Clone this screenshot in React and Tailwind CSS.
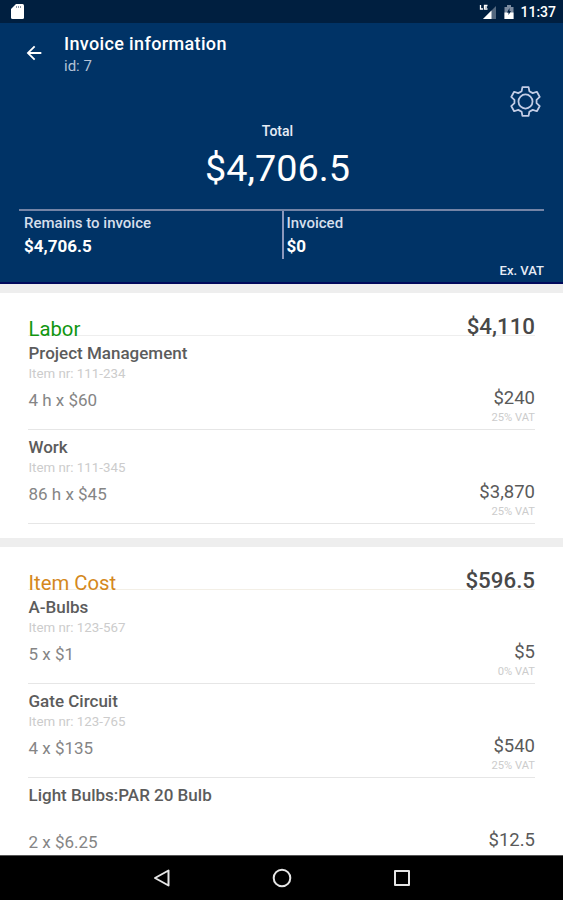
import { MdArrowBack } from "react-icons/md";

const sections = [
  {
    title: "Labor",
    total: "$4,110",
    titleClass: "text-[#119611]",
    lineClass: "border-[#eeeeee]",
    items: [
      { name: "Project Management", nr: "111-234", qty: "4 h x $60", price: "$240", vat: "25% VAT" },
      { name: "Work", nr: "111-345", qty: "86 h x $45", price: "$3,870", vat: "25% VAT" },
    ],
  },
  {
    title: "Item Cost",
    total: "$596.5",
    titleClass: "text-[#d4881c]",
    lineClass: "border-[#f3efe6]",
    items: [
      { name: "A-Bulbs", nr: "123-567", qty: "5 x $1", price: "$5", vat: "0% VAT" },
      { name: "Gate Circuit", nr: "123-765", qty: "4 x $135", price: "$540", vat: "25% VAT" },
      { name: "Light Bulbs:PAR 20 Bulb", nr: "", qty: "2 x $6.25", price: "$12.5", vat: "" },
    ],
  },
];

function GearIcon() {
  return (
    <svg viewBox="0 0 30 30" className="h-[31px] w-[31px]" fill="none" stroke="#c3cde6" strokeWidth="1.7" strokeLinejoin="round">
      <path d="M12 1h6l.7 4 3.3 1.900 4-1.300 2.800 5-3.100 2.800v3.200l3.100 2.800-2.800 5-4-1.300-3.300 1.900L18 29h-6l-.7-4L8 23.100l-4 1.300-2.800-5 3.100-2.800v-3.200l-3.100-2.800 2.800-5 4 1.300L11.300 5z" />
      <circle cx="15" cy="15" r="6.8" />
    </svg>
  );
}

function StatusBar() {
  return (
    <div className="flex h-[23px] shrink-0 items-center justify-between bg-[#001f40] pr-[7px] pl-[11px]">
      <svg viewBox="0 0 13 15" className="h-[15px] w-[13px]">
        <path d="M5 0h6.500Q13 0 13 1.500v12q0 1.500-1.500 1.500h-10Q0 15 0 13.500V5z" fill="#fff" />
        <path d="M5.500 2v2M7.500 2v2M9.500 2v2" stroke="#8a96a6" strokeWidth="1" />
      </svg>
      <div className="flex items-center">
        <svg viewBox="0 0 18 16" className="h-4 w-[18px]">
          <path d="M17 2v13H4z" fill="#54687f" />
          <path d="M12.500 6.500V15H4z" fill="#fff" />
          <path d="M1.500 1v4h2.500M8.500 1.500h-3V5h3M5.500 3.200h2.500" fill="none" stroke="#fff" strokeWidth="1.300" />
        </svg>
        <svg viewBox="0 0 10 14" className="ml-[7px] h-[14px] w-[10px]">
          <path d="M3 0h4v2h2.500v12h-9V2H3z" fill="#7c8ba0" />
          <path d="M.5 7.500h9V14h-9z" fill="#fff" />
          <path d="M5.500 3 3 7.500h1.500v2.500L7 6H5.500z" fill="#001f40" />
        </svg>
        <span className="ml-[6px] mt-px text-[14px] font-medium text-white">11:37</span>
      </div>
    </div>
  );
}

function Header() {
  return (
    <header className="flex h-[261px] shrink-0 flex-col border-b-2 border-[#000a5c] bg-[#003366] text-white">
      <div className="flex pt-[11px] pl-[24px]">
        <MdArrowBack className="mt-[8px] -ml-px h-[22px] w-[22px]" />
        <div className="ml-[19px]">
          <h1 className="text-[18px] leading-5 font-medium tracking-[0.02em]">Invoice information</h1>
          <p className="mt-[2px] text-[15px] leading-5 text-[#b3c2d6]">id: 7</p>
        </div>
      </div>
      <div className="mt-[10px] mr-[22px] flex h-[31px] justify-end">
        <GearIcon />
      </div>
      <div className="mt-[5px] pr-2 text-center">
        <p className="text-[14px] leading-[18px] font-medium text-[#e6ecf5]">Total</p>
        <p className="mt-[6px] text-[37.8px] leading-[44px]">$4,706.5</p>
      </div>
      <div className="mx-[19px] mt-[19px] grid grid-cols-2 border-t-2 border-[#7484a6] text-[15px]">
        <div className="pt-[2px] pl-[5px]">
          <p className="leading-5 font-medium text-[#d5dfec]">Remains to invoice</p>
          <p className="mt-[3px] text-[17px] leading-5 font-bold">$4,706.5</p>
        </div>
        <div className="h-[48px] border-l-2 border-[#8c98bc] pt-[2px] pl-[3px]">
          <p className="leading-5 font-medium text-[#d5dfec]">Invoiced</p>
          <p className="mt-[3px] text-[17px] leading-5 font-bold">$0</p>
        </div>
      </div>
      <p className="mt-[4px] mr-[19px] text-right text-[13px] leading-4 font-medium text-[#e6ecf5]">Ex. VAT</p>
    </header>
  );
}

function ItemRow({ item }) {
  return (
    <li className="flex h-[94px] justify-between border-b border-[#e6e6e6]">
      <div className="pt-[7px] pl-[0.5px]">
        <p className="text-[17px] leading-5 font-medium text-[#5c5c5c]">{item.name}</p>
        <p className="mt-[2px] h-[18px] text-[13.3px] leading-[18px] text-[#ccc]">{item.nr && `Item nr: ${item.nr}`}</p>
        <p className="mt-[7px] text-[17px] leading-5 text-[#858585]">{item.qty}</p>
      </div>
      <div className="pt-[50px] text-right">
        <p className="text-[18.5px] leading-6 text-[#5a5a5a]">{item.price}</p>
        <p className="text-[11.2px] leading-4 text-[#ccc]">{item.vat}</p>
      </div>
    </li>
  );
}

function Section({ section }) {
  return (
    <section className="mb-[9px] bg-white px-[28px] pb-[14px]">
      <div className={`flex h-[43px] items-end justify-between border-b ${section.lineClass}`}>
        <h2 className={`-mb-[6px] pl-[0.5px] text-[20.3px] leading-6 ${section.titleClass}`}>{section.title}</h2>
        <span className="-mb-[5px] text-[22.3px] leading-7 font-medium text-[#484848]">{section.total}</span>
      </div>
      <ul>
        {section.items.map((item) => (
          <ItemRow key={item.name} item={item} />
        ))}
      </ul>
    </section>
  );
}

function NavBar() {
  return (
    <nav className="flex h-[45px] shrink-0 items-center justify-center gap-[100px] border-t border-[#555] bg-black">
      <svg viewBox="0 0 20 20" className="h-5 w-5" fill="none" stroke="#e6e6e6" strokeWidth="2" strokeLinejoin="round">
        <path d="M16.500 2.500v15L3 10z" />
      </svg>
      <svg viewBox="0 0 20 20" className="h-5 w-5" fill="none" stroke="#e6e6e6" strokeWidth="2">
        <circle cx="10" cy="10" r="8.3" />
      </svg>
      <svg viewBox="0 0 20 20" className="h-5 w-5" fill="none" stroke="#e6e6e6" strokeWidth="2" strokeLinejoin="round">
        <path d="M3 3h14v14H3z" />
      </svg>
    </nav>
  );
}

export default function App() {
  return (
    <div className="flex h-screen w-full flex-col overflow-hidden bg-[#eeeeee] font-['Roboto',sans-serif]">
      <StatusBar />
      <Header />
      <main className="min-h-0 flex-1 overflow-hidden pt-[9px]">
        {sections.map((section) => (
          <Section key={section.title} section={section} />
        ))}
      </main>
      <NavBar />
    </div>
  );
}
